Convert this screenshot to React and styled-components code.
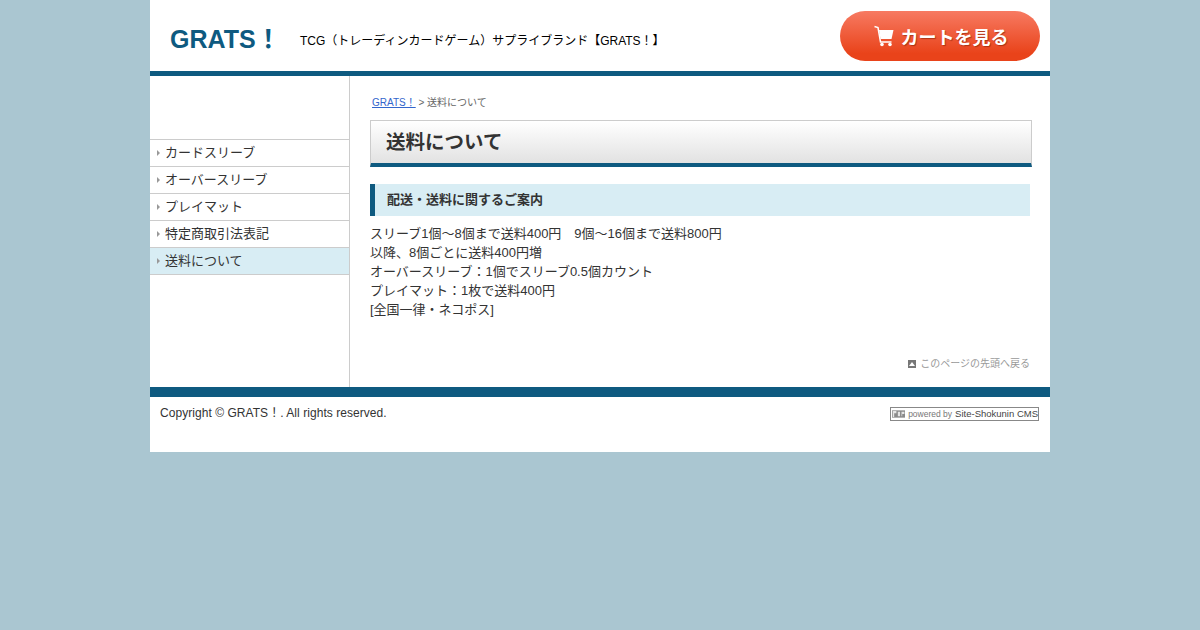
import styled, { createGlobalStyle } from "styled-components";

const GlobalStyle = createGlobalStyle`
	html, body {
		margin: 0;
		padding: 0;
		background: #aac6d1;
		font-family: "Liberation Sans", "Noto Sans CJK JP", sans-serif;
		color: #333333;
	}
`;

const Page = styled.div`
	width: 900px;
	margin: 0 auto;
	background: #ffffff;
`;

const Header = styled.header`
	height: 71px;
	border-bottom: 5px solid #0e5a80;
	display: flex;
	align-items: flex-start;
	padding-left: 20px;
`;

const Logo = styled.h1`
	width: 130px;
	margin: 22px 0 0;
	font-size: 25px;
	line-height: 34px;
	font-weight: bold;
	color: #0e5a80;
	white-space: nowrap;
`;

const Tagline = styled.p`
	flex: 1;
	margin: 33px 0 0;
	font-size: 12px;
	line-height: 16px;
	color: #000000;
	white-space: nowrap;
`;

const CartButton = styled.a`
	width: 200px;
	height: 50px;
	margin: 11px 10px 0 0;
	border-radius: 25px;
	background: linear-gradient(#f77a62, #e9431a 85%);
	display: flex;
	align-items: center;
	justify-content: center;
	gap: 7px;
	padding-left: 2px;
	box-sizing: border-box;
	color: #ffffff;
	font-size: 18px;
	font-weight: bold;
	text-shadow: 1px 1px 1px rgba(120, 30, 0, 0.55);
`;

const Body = styled.div`
	display: flex;
`;

const Sidebar = styled.nav`
	width: 200px;
	height: 311px;
	border-right: 1px solid #cccccc;
	padding-top: 63px;
	box-sizing: border-box;
`;

const MenuList = styled.ul`
	margin: 0;
	padding: 0;
	list-style: none;
	border-top: 1px solid #cccccc;
`;

const MenuItem = styled.li`
	height: 22px;
	padding: 0 0 4px 7px;
	border-bottom: 1px solid #cccccc;
	background: ${(props) => (props.$active ? "#d8edf4" : "#ffffff")};
	display: flex;
	align-items: center;
	gap: 5px;
	font-size: 13px;
	color: #333333;
`;

const Arrow = styled.span`
	width: 0;
	height: 0;
	margin-top: 3px;
	border-left: 3px solid #999999;
	border-top: 3px solid transparent;
	border-bottom: 3px solid transparent;
`;

const Main = styled.main`
	flex: 1;
	padding: 20px 18px 0 20px;
`;

const Breadcrumb = styled.div`
	height: 24px;
	padding-left: 2px;
	font-size: 10px;
	line-height: 14px;
	color: #666666;
`;

const CrumbLink = styled.a`
	color: #3366cc;
	text-decoration: underline;
`;

const PageTitle = styled.h2`
	margin: 0;
	height: 42px;
	border: 1px solid #cccccc;
	border-bottom: 4px solid #0e5a80;
	background: linear-gradient(#ffffff, #e2e2e2);
	padding-left: 15px;
	font-size: 19.5px;
	line-height: 42px;
	font-weight: bold;
	color: #333333;
`;

const SectionTitle = styled.h3`
	width: 643px;
	height: 32px;
	margin: 17px 0 0;
	border-left: 5px solid #0e5a80;
	background: #d8edf4;
	padding-left: 12px;
	font-size: 13px;
	line-height: 32px;
	font-weight: bold;
	color: #333333;
`;

const Text = styled.p`
	margin: 8px 0 0;
	font-size: 13px;
	line-height: 19px;
	color: #333333;
`;

const TopLink = styled.div`
	width: 660px;
	margin-top: 38px;
	display: flex;
	justify-content: flex-end;
	align-items: center;
	gap: 4px;
	font-size: 10px;
	line-height: 14px;
	color: #999999;
`;

const TopIcon = styled.svg`
	width: 8px;
	height: 8px;
`;

const Footer = styled.footer`
	height: 55px;
	border-top: 10px solid #0e5a80;
	display: flex;
	justify-content: space-between;
	align-items: flex-start;
	padding: 0 11px 0 10px;
`;

const Copyright = styled.p`
	margin: 8px 0 0;
	font-size: 12px;
	line-height: 16px;
	letter-spacing: 0.05px;
	color: #333333;
`;

const Powered = styled.div`
	width: 146px;
	height: 12px;
	margin-top: 10px;
	border: 1px solid #888888;
	display: flex;
	align-items: center;
	gap: 3px;
	padding-left: 1px;
	font-size: 8.5px;
	line-height: 12px;
	color: #777777;
	white-space: nowrap;
	overflow: hidden;
`;

const PoweredName = styled.span`
	font-size: 9.5px;
	color: #444444;
`;

const menu = ["カードスリーブ", "オーバースリーブ", "プレイマット", "特定商取引法表記", "送料について"];

const CartIcon = () => (
	<svg width="20" height="22" viewBox="0 0 20 22">
		<path d="M0.5 1.5l3.5 1 2.5 14.5h11" fill="none" stroke="#fff" strokeWidth="1.5" />
		<path d="M5 5h14.500l-2 9H6.500z" fill="#fff" />
		<circle cx="8" cy="19.500" r="1.800" fill="#fff" />
		<circle cx="16" cy="19.500" r="1.800" fill="#fff" />
	</svg>
);

const PoweredLogo = () => (
	<svg width="18" height="10" viewBox="0 0 18 10">
		<rect width="18" height="10" fill="#8a8a8a" />
		<path d="M1 1h5v3H3v5H1zM8 2h3v6H8zM13 2h4v3h-3v3h-1z" fill="#e4e4e4" />
	</svg>
);

const App = () => {
	return (
		<>
			<GlobalStyle />
			<Page>
				<Header>
					<Logo>GRATS！</Logo>
					<Tagline>TCG（トレーディンカードゲーム）サプライブランド【GRATS！】</Tagline>
					<CartButton>
						<CartIcon />
						カートを見る
					</CartButton>
				</Header>
				<Body>
					<Sidebar>
						<MenuList>
							{menu.map((item, i) => (
								<MenuItem key={item} $active={i === menu.length - 1}>
									<Arrow />
									{item}
								</MenuItem>
							))}
						</MenuList>
					</Sidebar>
					<Main>
						<Breadcrumb>
							<CrumbLink>GRATS！</CrumbLink> &gt; 送料について
						</Breadcrumb>
						<PageTitle>送料について</PageTitle>
						<SectionTitle>配送・送料に関するご案内</SectionTitle>
						<Text>
							スリーブ1個～8個まで送料400円　9個～16個まで送料800円
							<br />
							以降、8個ごとに送料400円増
							<br />
							オーバースリーブ：1個でスリーブ0.5個カウント
							<br />
							プレイマット：1枚で送料400円
							<br />
							[全国一律・ネコポス]
						</Text>
						<TopLink>
							<TopIcon viewBox="0 0 8 8">
								<rect width="8" height="8" fill="#777" />
								<path d="M4 2l3 4H1z" fill="#fff" />
							</TopIcon>
							このページの先頭へ戻る
						</TopLink>
					</Main>
				</Body>
				<Footer>
					<Copyright>Copyright © GRATS！. All rights reserved.</Copyright>
					<Powered>
						<PoweredLogo />
						powered by <PoweredName>Site-Shokunin CMS</PoweredName>
					</Powered>
				</Footer>
			</Page>
		</>
	);
};

export default App;
